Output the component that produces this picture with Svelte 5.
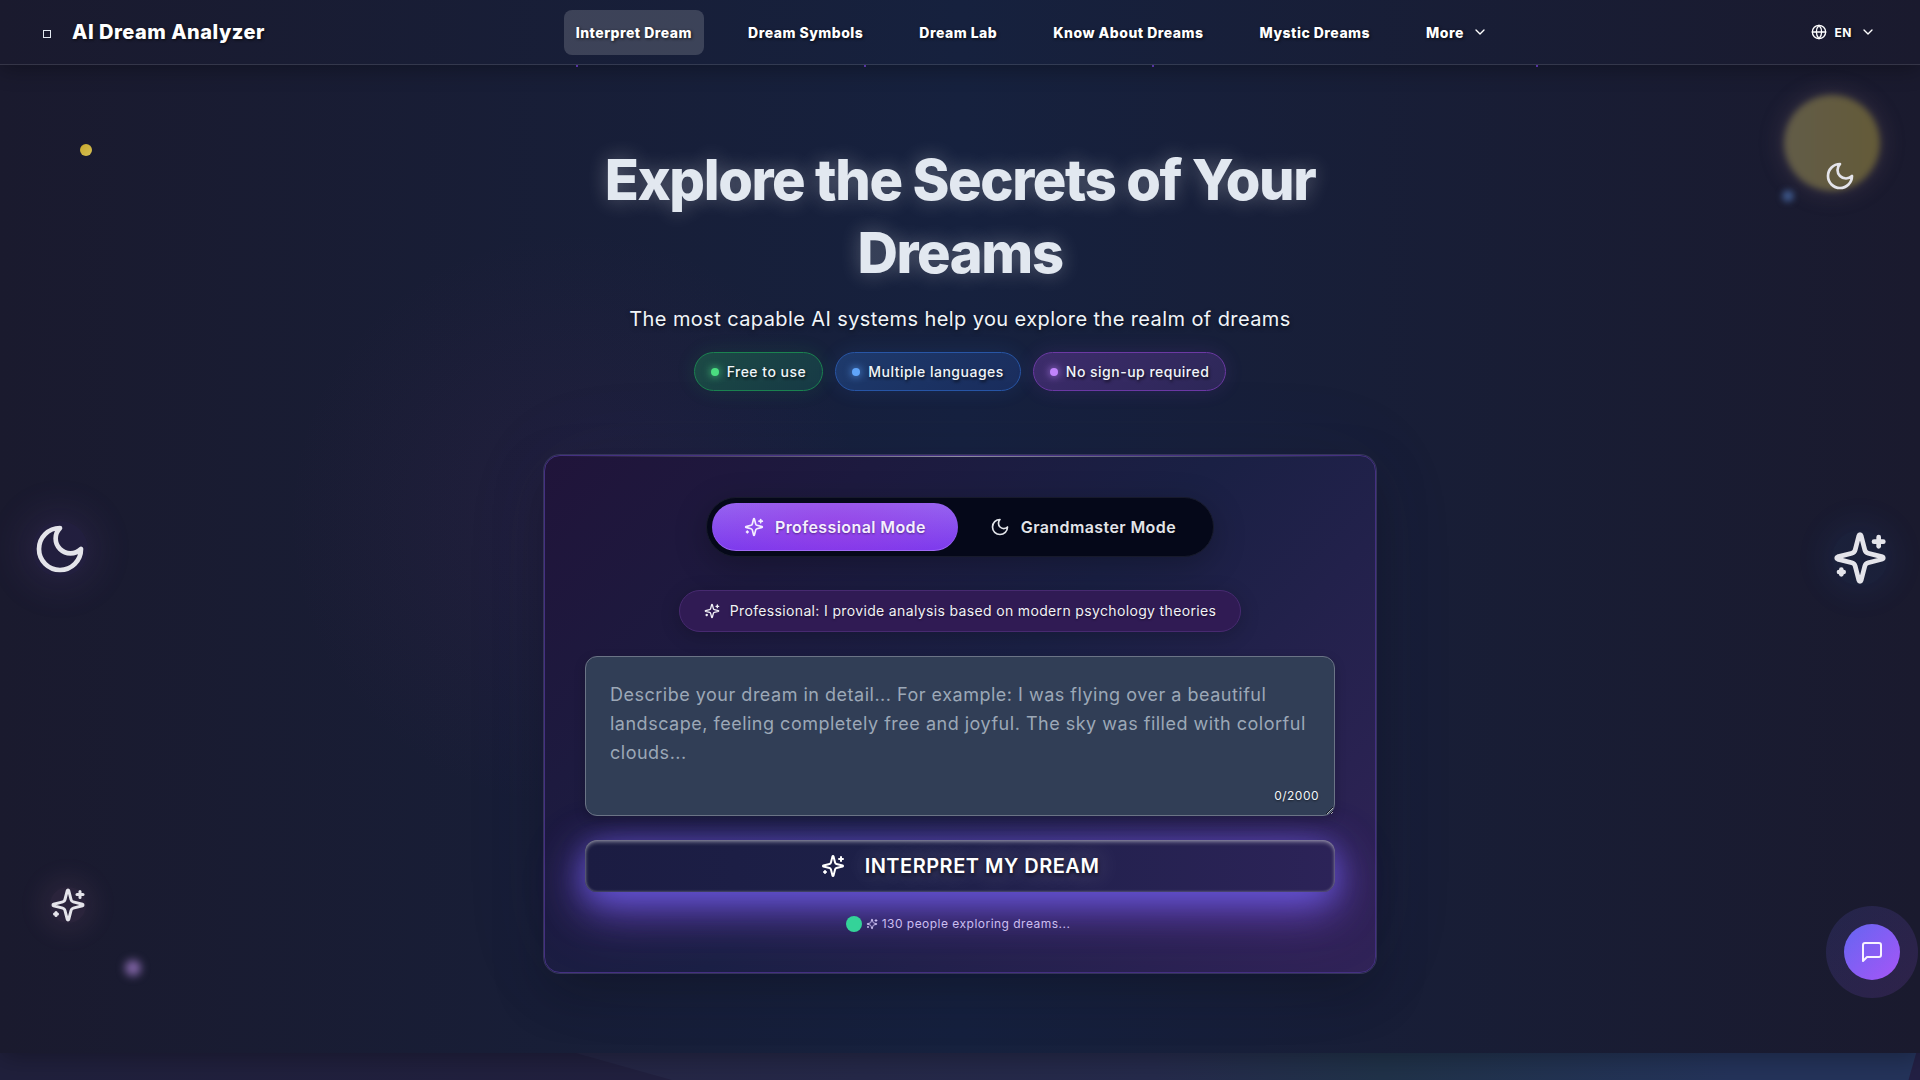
<script lang="ts">
    const links = ['Interpret Dream', 'Dream Symbols', 'Dream Lab', 'Know About Dreams', 'Mystic Dreams'];

    const badges = [
        {text: 'Free to use', tone: 'green'},
        {text: 'Multiple languages', tone: 'blue'},
        {text: 'No sign-up required', tone: 'purple'},
    ];

    const maxLength = 2000;

    let mode = $state('professional');
    let dream = $state('');
</script>

{#snippet sparkles(size: number)}
    <svg width={size} height={size} viewBox="0 0 24 24" aria-hidden="true">
        <path d="M9.937 15.5A2 2 0 0 0 8.5 14.063l-6.135-1.582a.5.5 0 0 1 0-.962L8.5 9.936A2 2 0 0 0 9.937 8.5l1.582-6.135a.5.5 0 0 1 .963 0L14.063 8.5A2 2 0 0 0 15.5 9.937l6.135 1.581a.5.5 0 0 1 0 .964L15.5 14.063a2 2 0 0 0-1.437 1.437l-1.582 6.135a.5.5 0 0 1-.963 0z" />
        <path d="M20 3v4" />
        <path d="M22 5h-4" />
        <path d="M4 17v2" />
        <path d="M5 18H3" />
    </svg>
{/snippet}

{#snippet moon(size: number)}
    <svg width={size} height={size} viewBox="0 0 24 24" aria-hidden="true">
        <path d="M12 3a6 6 0 0 0 9 9 9 9 0 1 1-9-9Z" />
    </svg>
{/snippet}

{#snippet chevron()}
    <svg width="16" height="16" viewBox="0 0 24 24" aria-hidden="true">
        <path d="m6 9 6 6 6-6" />
    </svg>
{/snippet}

<div class="page">
    <header>
        <a class="logo" href="#home">
            <span class="logo-mark"></span>
            AI Dream Analyzer
        </a>
        <nav>
            {#each links as link, i}
                <a class="nav-item" class:active={i === 0} href="#{i}">{link}</a>
            {/each}
            <button class="nav-item more" type="button">More {@render chevron()}</button>
        </nav>
        <button class="language" type="button">
            <svg width="16" height="16" viewBox="0 0 24 24" aria-hidden="true">
                <circle cx="12" cy="12" r="10" />
                <path d="M12 2a14.5 14.5 0 0 0 0 20 14.5 14.5 0 0 0 0-20" />
                <path d="M2 12h20" />
            </svg>
            EN
            {@render chevron()}
        </button>
    </header>

    <main>
        <div class="sky" aria-hidden="true">
            <i class="speck s1"></i>
            <i class="speck s2"></i>
            <i class="speck s3"></i>
            <i class="speck s4"></i>
            <i class="orb sun"></i>
            <i class="orb gold"></i>
            <i class="orb azure"></i>
            <i class="orb violet"></i>
            <span class="float moon-small">{@render moon(32)}</span>
            <span class="float moon-large">{@render moon(56)}</span>
            <span class="float stars-large">{@render sparkles(56)}</span>
            <span class="float stars-small">{@render sparkles(36)}</span>
        </div>

        <section class="intro">
            <h1>Explore the Secrets of Your Dreams</h1>
            <p>The most capable AI systems help you explore the realm of dreams</p>
            <ul>
                {#each badges as badge}
                    <li class={badge.tone}>{badge.text}</li>
                {/each}
            </ul>
        </section>

        <form class="card" onsubmit={(e) => e.preventDefault()}>
            <div class="modes">
                <button type="button" class:selected={mode === 'professional'} onclick={() => (mode = 'professional')}>
                    {@render sparkles(20)} Professional Mode
                </button>
                <button type="button" class:selected={mode === 'grandmaster'} onclick={() => (mode = 'grandmaster')}>
                    {@render moon(20)} Grandmaster Mode
                </button>
            </div>

            <p class="hint">
                {@render sparkles(16)}
                Professional: I provide analysis based on modern psychology theories
            </p>

            <div class="field">
                <textarea
                    bind:value={dream}
                    maxlength={maxLength}
                    aria-label="Describe your dream"
                    placeholder="Describe your dream in detail... For example: I was flying over a beautiful landscape, feeling completely free and joyful. The sky was filled with colorful clouds..."
                ></textarea>
                <span class="counter">{dream.length}/{maxLength}</span>
            </div>

            <button class="submit" type="submit">
                {@render sparkles(24)}
                <span>INTERPRET MY DREAM</span>
            </button>

            <p class="status">
                <i></i>
                {@render sparkles(12)}
                130 people exploring dreams...
            </p>
        </form>
    </main>

    <div class="next-section"></div>

    <button class="chat" type="button" aria-label="Open chat">
        <svg width="24" height="24" viewBox="0 0 24 24" aria-hidden="true">
            <path d="M21 15a2 2 0 0 1-2 2H7l-4 4V5a2 2 0 0 1 2-2h14a2 2 0 0 1 2 2z" />
        </svg>
    </button>
</div>

<style>
    :global(body) {
        margin: 0;
        background: #1a1a2e;
    }

    .page {
        position: relative;
        height: 100vh;
        overflow: hidden;
        font-family: Inter, 'Liberation Sans', sans-serif;
        color: #fff;
    }

    .page *,
    .page *::before,
    .page *::after {
        box-sizing: border-box;
    }

    button {
        font: inherit;
        color: inherit;
        background: none;
        border: 0;
        padding: 0;
        cursor: pointer;
    }

    a {
        color: inherit;
        text-decoration: none;
    }

    h1,
    p,
    ul {
        margin: 0;
        padding: 0;
    }

    svg {
        flex: none;
        fill: none;
        stroke: currentColor;
        stroke-width: 2;
        stroke-linecap: round;
        stroke-linejoin: round;
    }

    header {
        position: relative;
        z-index: 2;
        display: flex;
        justify-content: space-between;
        align-items: center;
        height: 65px;
        padding: 0 40px;
        background: linear-gradient(90deg, #1a1a2e, #16213e 50%, #1a1a2e);
        border-bottom: 1px solid rgba(255, 255, 255, 0.12);
        box-shadow: 0 4px 20px rgba(0, 0, 0, 0.3);
        text-shadow: 1px 1px 3px rgba(0, 0, 0, 0.7);
    }

    .logo {
        display: flex;
        align-items: center;
        gap: 21px;
        padding-left: 3px;
        font-size: 20px;
        font-weight: 800;
        letter-spacing: 0.025em;
    }

    .logo-mark {
        width: 8px;
        height: 8px;
        margin-top: 4px;
        border: 1px solid #e2e8f0;
    }

    nav {
        display: flex;
        gap: 32px;
    }

    .nav-item {
        display: flex;
        align-items: center;
        height: 45px;
        padding: 0 12px;
        border-radius: 8px;
        font-size: 14px;
        font-weight: 800;
        letter-spacing: 0.035em;
        text-shadow: inherit;
    }

    .nav-item.active {
        background: rgba(255, 255, 255, 0.16);
    }

    .more {
        gap: 8px;
    }

    .language {
        display: flex;
        align-items: center;
        gap: 8px;
        padding: 0 4px 0 12px;
        font-size: 12px;
        font-weight: 700;
        letter-spacing: 0.04em;
        text-shadow: inherit;
    }

    main {
        position: relative;
        z-index: 1;
        display: flex;
        flex-direction: column;
        align-items: center;
        padding: 79px 24px 80px;
        background:
            radial-gradient(circle at 30% 46%, rgba(120, 40, 120, 0.1), transparent 20%),
            linear-gradient(90deg, #1a1a2e, #16213e 50%, #1a1a2e);
        box-shadow: 0 4px 24px rgba(0, 0, 0, 0.3);
    }

    .sky {
        position: absolute;
        inset: 0;
        overflow: hidden;
    }

    .speck,
    .orb,
    .float {
        position: absolute;
    }

    .speck {
        top: 0;
        width: 2px;
        height: 2px;
        background: #6a40c8;
    }

    .s1 {
        left: 30%;
    }

    .s2 {
        left: 45%;
    }

    .s3 {
        left: 60%;
    }

    .s4 {
        left: 80%;
    }

    .orb {
        border-radius: 50%;
    }

    .sun {
        top: 30px;
        right: 40px;
        width: 96px;
        height: 96px;
        background: linear-gradient(90deg, #625c48, #645b38);
        filter: blur(3px);
        box-shadow: 0 0 24px rgba(140, 110, 120, 0.3);
    }

    .gold {
        top: 79px;
        left: 80px;
        width: 12px;
        height: 12px;
        background: linear-gradient(135deg, #caa92c, #d3bf55);
    }

    .azure {
        top: 125px;
        right: 126px;
        width: 12px;
        height: 12px;
        background: #3d5687;
        filter: blur(3px);
    }

    .violet {
        bottom: 77px;
        left: 125px;
        width: 16px;
        height: 16px;
        background: #8064a5;
        filter: blur(4px);
    }

    .float {
        display: flex;
        border-radius: 50%;
        color: #e4e4ea;
    }

    .moon-small {
        top: 95px;
        right: 64px;
    }

    .moon-large {
        top: 456px;
        left: 32px;
        background: rgba(139, 92, 246, 0.08);
        box-shadow: 0 0 40px 8px rgba(139, 92, 200, 0.13);
    }

    .stars-large {
        top: 465px;
        right: 32px;
        background: rgba(59, 130, 246, 0.06);
        box-shadow: 0 0 36px 4px rgba(59, 130, 246, 0.1);
    }

    .stars-small {
        top: 822px;
        left: 50px;
        background: rgba(236, 150, 200, 0.08);
        box-shadow: 0 0 28px 8px rgba(236, 150, 200, 0.09);
    }

    .intro {
        position: relative;
        max-width: 832px;
        text-align: center;
    }

    h1 {
        font-size: 56px;
        line-height: 73px;
        font-weight: 800;
        letter-spacing: -0.025em;
        color: #e2e8f0;
        text-shadow: 0 0 20px rgba(255, 255, 255, 0.3);
    }

    .intro p {
        margin-top: 15px;
        font-size: 20px;
        line-height: 28px;
        letter-spacing: 0.02em;
        color: #f1f5f9;
        text-shadow: 0 2px 4px rgba(0, 0, 0, 0.5);
    }

    .intro ul {
        display: flex;
        justify-content: center;
        gap: 12px;
        margin-top: 19px;
        list-style: none;
    }

    .intro li {
        display: flex;
        align-items: center;
        gap: 8px;
        padding: 8px 16px;
        border: 1px solid var(--edge);
        border-radius: 20px;
        font-size: 14px;
        line-height: 21px;
        font-weight: 500;
        letter-spacing: 0.035em;
        color: #f1f5f9;
        text-shadow: 1px 2px 3px rgba(0, 0, 0, 0.7);
    }

    .intro li::before {
        content: '';
        width: 8px;
        height: 8px;
        border-radius: 50%;
        background: var(--dot);
        box-shadow: 0 0 8px var(--dot);
    }

    .green {
        --dot: #4ade80;
        --edge: #1b8350;
        background: linear-gradient(135deg, #1c4a45, #173a46);
        box-shadow: 0 0 20px rgba(34, 197, 94, 0.12);
    }

    .blue {
        --dot: #60a5fa;
        --edge: #2856a6;
        background: linear-gradient(135deg, #1e3a6c, #1a2d5d);
        box-shadow: 0 0 20px rgba(59, 130, 246, 0.12);
    }

    .purple {
        --dot: #c084fc;
        --edge: #6c39a4;
        background: linear-gradient(135deg, #3d2c6c, #2d2858);
        box-shadow: 0 0 20px rgba(168, 85, 247, 0.12);
    }

    .card {
        position: relative;
        display: flex;
        flex-direction: column;
        align-items: center;
        width: 100%;
        max-width: 832px;
        margin-top: 64px;
        padding: 41px 40px 40px;
        border: 1px solid #453082;
        border-radius: 16px;
        background: linear-gradient(135deg, #20143a, #1a2044 50%, #312358) border-box;
        box-shadow:
            0 0 0 1px #343558,
            0 20px 50px rgba(0, 0, 0, 0.25),
            0 0 100px rgba(60, 60, 180, 0.06);
    }

    .card::before {
        content: '';
        position: absolute;
        top: 0;
        left: 16px;
        right: 16px;
        height: 1px;
        background: linear-gradient(90deg, transparent, rgba(255, 255, 255, 0.5), transparent);
    }

    .modes {
        display: flex;
        padding: 5px;
        border: 1px solid #171a2b;
        border-radius: 30px;
        background: #050819;
        box-shadow: 0 8px 32px rgba(0, 0, 0, 0.25);
    }

    .modes button {
        display: flex;
        align-items: center;
        gap: 11px;
        height: 48px;
        padding: 0 32px;
        border-radius: 24px;
        font-size: 16px;
        font-weight: 600;
        letter-spacing: 0.025em;
        color: #e2e4e9;
        text-shadow: 0 1px 2px rgba(0, 0, 0, 0.4);
    }

    .modes .selected {
        color: #f5efff;
        background:
            radial-gradient(ellipse 50% 120% at 50% 50%, rgba(168, 50, 220, 0.35), transparent),
            linear-gradient(#9763f0, #7c3aed);
        box-shadow: inset 0 -1px 0 #a06bf5;
    }

    .hint {
        display: flex;
        align-items: center;
        gap: 10px;
        margin-top: 33px;
        padding: 9px 24px;
        border: 1px solid #472a70;
        border-radius: 21px;
        background: #301b54;
        box-shadow: 0 4px 20px rgba(0, 0, 0, 0.2);
        font-size: 14px;
        line-height: 22px;
        letter-spacing: 0.025em;
        color: #f1f1f6;
        text-shadow: 0 1px 2px rgba(0, 0, 0, 0.5);
    }

    .field {
        position: relative;
        z-index: 1;
        display: flex;
        width: 100%;
        margin-top: 24px;
    }

    textarea {
        width: 100%;
        height: 160px;
        padding: 23px 24px;
        border: 1px solid #6b7486;
        border-radius: 12px;
        outline: 0;
        background: #313e56;
        box-shadow: 0 4px 12px rgba(0, 0, 0, 0.2);
        font: 18px/29px Inter, 'Liberation Sans', sans-serif;
        letter-spacing: 0.028em;
        color: #fff;
        resize: vertical;
    }

    textarea::placeholder {
        color: #9ca8b7;
    }

    .counter {
        position: absolute;
        right: 16px;
        bottom: 12px;
        font-size: 12px;
        line-height: 16px;
        letter-spacing: 0.04em;
        color: #f1f5f9;
        text-shadow: 0 1px 2px rgba(0, 0, 0, 0.5);
    }

    .submit {
        display: flex;
        align-items: center;
        justify-content: center;
        gap: 20px;
        width: 100%;
        height: 52px;
        margin-top: 24px;
        border-radius: 12px;
        background: linear-gradient(90deg, #1b1c42, #1d2048 40%, #2c2358);
        box-shadow:
            inset 0 2px 4px rgba(255, 255, 255, 0.4),
            inset 0 0 3px rgba(255, 255, 255, 0.3),
            0 12px 40px rgba(104, 90, 226, 0.95),
            0 4px 24px rgba(104, 90, 226, 0.3),
            0 20px 60px rgba(130, 50, 190, 0.45);
        font-size: 20px;
        font-weight: 600;
        letter-spacing: 0.025em;
        text-shadow:
            0 2px 4px rgba(0, 0, 0, 0.7),
            0 0 24px rgba(255, 255, 255, 0.35);
    }

    .status {
        display: flex;
        align-items: center;
        gap: 4px;
        margin-top: 24px;
        padding-right: 4px;
        font-size: 12px;
        line-height: 16px;
        letter-spacing: 0.04em;
        color: #ccbff0;
    }

    .status i {
        width: 16px;
        height: 16px;
        border-radius: 50%;
        background: #34d399;
    }

    .next-section {
        position: relative;
        height: 100vh;
        background: linear-gradient(90deg, #20203c, #232044);
    }

    .next-section::before {
        content: '';
        position: absolute;
        inset: 0;
        background: linear-gradient(90deg, #252645 30%, #252a4b 60%, #203249 72%, #24335a 90%);
        clip-path: polygon(30% 0, 99.8% 0, 99.4% 27px, 99.4% 100%, 40% 100%, 35% 27px);
    }

    .chat {
        position: absolute;
        z-index: 3;
        right: 20px;
        bottom: 100px;
        display: grid;
        place-items: center;
        width: 56px;
        height: 56px;
        border-radius: 50%;
        background: linear-gradient(135deg, #6366f1, #a855f7);
        color: #f7f2ff;
    }

    .chat::before {
        content: '';
        position: absolute;
        z-index: -1;
        inset: -18px;
        border-radius: 50%;
        background: linear-gradient(135deg, rgba(99, 102, 241, 0.14), rgba(168, 85, 247, 0.14));
    }
</style>
